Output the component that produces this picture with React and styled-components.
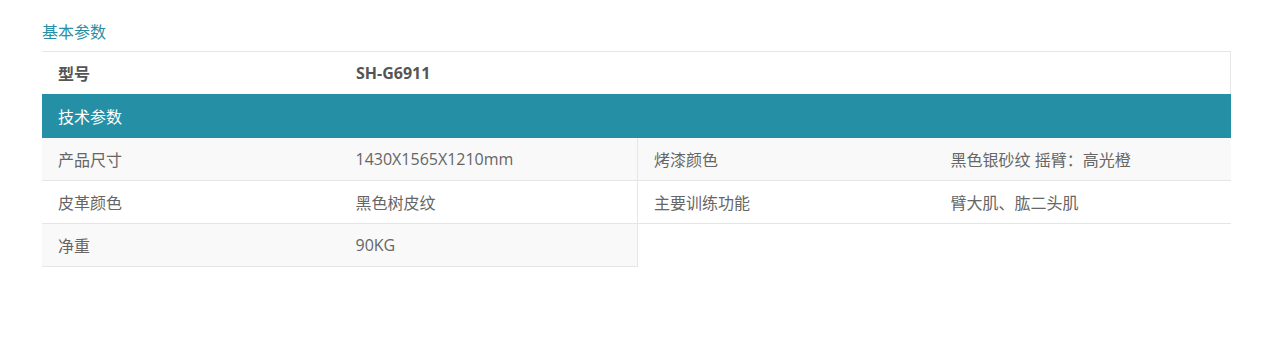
import styled, { createGlobalStyle } from "styled-components";

const GlobalStyle = createGlobalStyle`
body {
  margin: 0;
  background: #fff;
  font-family: "Open Sans", "Noto Sans CJK SC", sans-serif;
  font-size: 16px;
  color: #666;
}
`;

const ParamsSection = styled.section`
width: 1189px;
padding: 22px 0 0 42px;
`;

const SectionTitle = styled.h3`
margin: 0 0 9px;
font-size: 16px;
font-weight: 400;
line-height: 20px;
color: #2590a6;
`;

const ModelRow = styled.div`
display: flex;
height: 42px;
align-items: center;
border-top: 1px solid #e6e6e6;
border-right: 1px solid #e6e6e6;
font-weight: 700;
color: #555;
`;

const ModelCell = styled.div`
width: ${(p) => p.$width || "auto"};
padding-left: 16px;
box-sizing: border-box;
`;

const GroupHeader = styled.div`
height: 44px;
display: flex;
align-items: center;
padding-left: 16px;
background: #258fa6;
color: #fff;
`;

const SpecGrid = styled.div`
display: grid;
grid-template-columns: 596px 1fr;
`;

const SpecItem = styled.div`
display: flex;
align-items: center;
height: 42px;
border-bottom: 1px solid #e6e6e6;
border-right: ${(p) => (p.$left ? "1px solid #e6e6e6" : "none")};
background: ${(p) => (p.$shaded ? "#f9f9f9" : "#fff")};
`;

const SpecLabel = styled.span`
width: 50%;
padding-left: 16px;
box-sizing: border-box;
`;

const SpecValue = styled.span`
width: 50%;
padding-left: 16px;
box-sizing: border-box;
`;

const specs = [
    ["产品尺寸", "1430X1565X1210mm"],
    ["烤漆颜色", "黑色银砂纹 摇臂：高光橙"],
    ["皮革颜色", "黑色树皮纹"],
    ["主要训练功能", "臂大肌、肱二头肌"],
    ["净重", "90KG"],
];

const App = () => {
    return (
        <>
            <GlobalStyle />
            <ParamsSection>
                <SectionTitle>基本参数</SectionTitle>
                <ModelRow>
                    <ModelCell $width="298px">型号</ModelCell>
                    <ModelCell>SH-G6911</ModelCell>
                </ModelRow>
                <GroupHeader>技术参数</GroupHeader>
                <SpecGrid>
                    {specs.map(([label, value], i) => (
                        <SpecItem
                            key={label}
                            $left={i % 2 === 0}
                            $shaded={Math.floor(i / 2) % 2 === 0}
                        >
                            <SpecLabel>{label}</SpecLabel>
                            <SpecValue>{value}</SpecValue>
                        </SpecItem>
                    ))}
                </SpecGrid>
            </ParamsSection>
        </>
    );
};

export default App;
